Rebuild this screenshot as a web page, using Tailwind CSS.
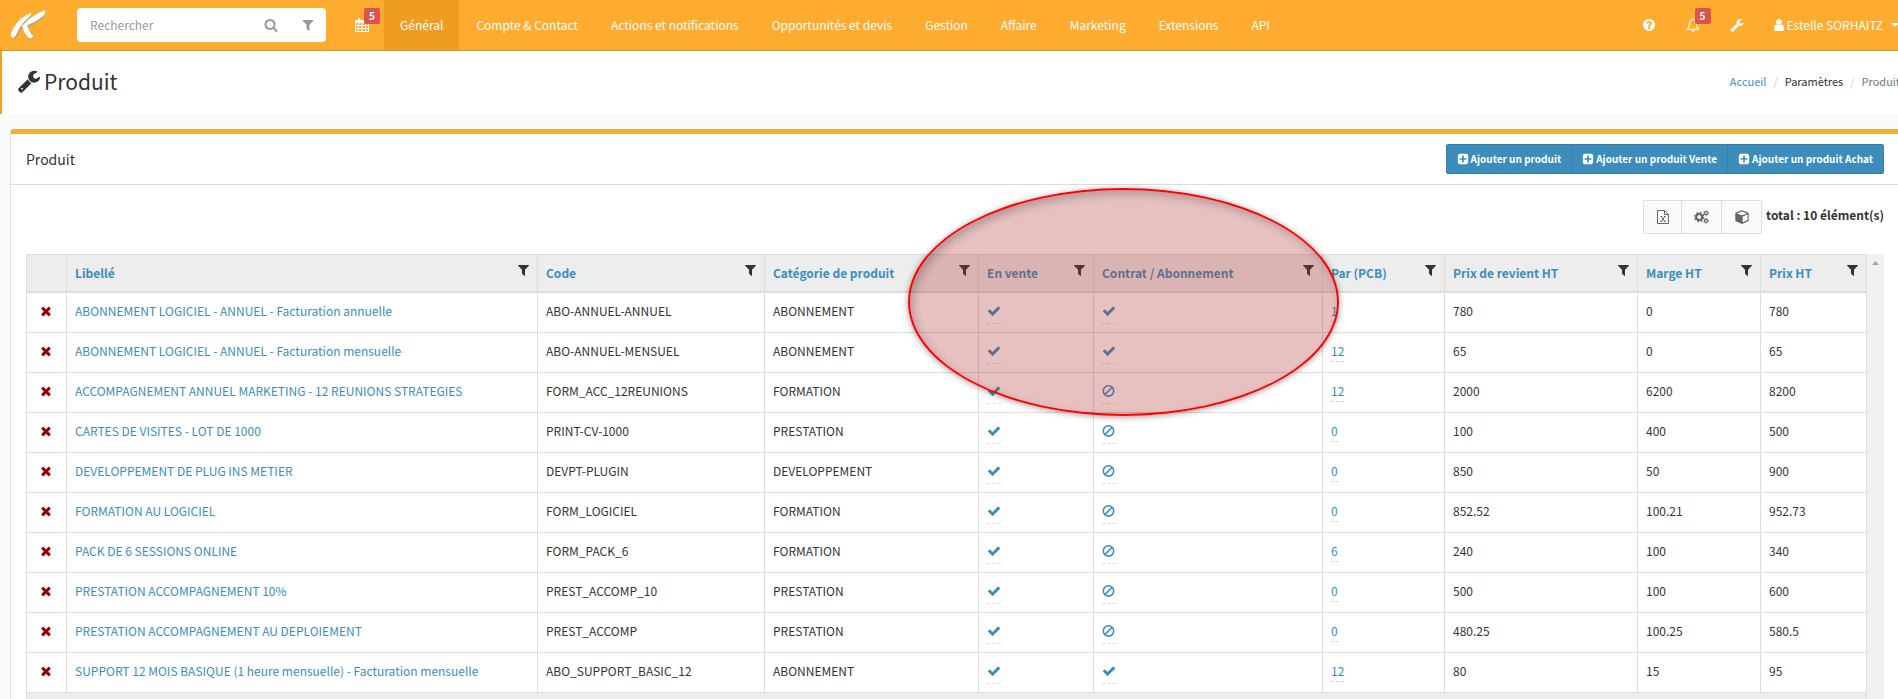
<!DOCTYPE html>
<html lang="fr">
  <head>
    <meta charset="UTF-8" />
    <meta name="viewport" content="width=device-width, initial-scale=1.0" />
    <title>Produit</title>
    <script src="https://cdn.jsdelivr.net/npm/@tailwindcss/browser@4"></script>
  </head>
  <body class="relative h-screen overflow-hidden bg-[#fafafa] font-['Noto_Sans_CJK_SC',sans-serif] text-[12px] leading-5 text-[#333]">
    <!-- Icônes -->
    <svg class="hidden">
      <symbol id="i-filter" viewBox="0 0 1408 1792"><path d="M1403 295q17 41-14 70l-493 493v742q0 42-39 59-13 5-25 5-27 0-45-19l-256-256q-19-19-19-45v-486l-493-493q-31-29-14-70 17-39 59-39h1280q42 0 59 39z" /></symbol>
      <symbol id="i-search" viewBox="0 0 1792 1792"><path d="M1216 832q0-185-131.500-316.500t-316.500-131.500-316.500 131.500-131.500 316.500 131.500 316.500 316.500 131.500 316.500-131.500 131.500-316.500zm512 832q0 52-38 90t-90 38q-54 0-90-38l-343-342q-179 124-399 124-143 0-273.500-55.500t-225-150-150-225-55.500-273.500 55.500-273.500 150-225 225-150 273.500-55.500 273.500 55.500 225 150 150 225 55.500 273.500q0 220-124 399l343 343q37 37 37 90z" /></symbol>
      <symbol id="i-wrench" viewBox="0 0 1792 1792"><path d="M448 1472q0-26-19-45t-45-19-45 19-19 45 19 45 45 19 45-19 19-45zm644-420l-682 682q-37 37-90 37-52 0-91-37l-106-108q-38-36-38-90 0-53 38-91l681-681q39 98 114.500 173.500t173.500 114.500zm634-435q0 39-23 106-47 134-164.500 217.500t-258.500 83.500q-185 0-316.500-131.500t-131.500-316.500 131.500-316.500 316.500-131.500q58 0 121.500 16.500t107.500 46.500q16 11 16 28t-16 28l-293 169v224l193 107q5-3 79-48.500t135.500-81 70.500-35.500q15 0 23.500 10t8.500 25z" /></symbol>
      <symbol id="i-check" viewBox="0 0 1792 1792"><path d="M1671 566q0 40-28 68l-724 724-136 136q-28 28-68 28t-68-28l-136-136-362-362q-28-28-28-68t28-68l136-136q28-28 68-28t68 28l294 295 656-657q28-28 68-28t68 28l136 136q28 28 28 68z" /></symbol>
      <symbol id="i-times" viewBox="0 0 1792 1792"><path d="M1490 1322q0 40-28 68l-136 136q-28 28-68 28t-68-28l-294-294-294 294q-28 28-68 28t-68-28l-136-136q-28-28-28-68t28-68l294-294-294-294q-28-28-28-68t28-68l136-136q28-28 68-28t68 28l294 294 294-294q28-28 68-28t68 28l136 136q28 28 28 68t-28 68l-294 294 294 294q28 28 28 68z" /></symbol>
      <symbol id="i-ban" viewBox="0 0 14 14"><path d="M6.500 1.700a5.200 5.200 0 1 0 0 10.400a5.200 5.200 0 1 0 0-10.400zM2.800 10.600l7.400-7.400" fill="none" stroke="currentColor" stroke-width="1.600" /></symbol>
      <symbol id="i-plus" viewBox="0 0 1792 1792"><path d="M1408 960v-128q0-26-19-45t-45-19h-320v-320q0-26-19-45t-45-19h-128q-26 0-45 19t-19 45v320h-320q-26 0-45 19t-19 45v128q0 26 19 45t45 19h320v320q0 26 19 45t45 19h128q26 0 45-19t19-45v-320h320q26 0 45-19t19-45zm256-544v960q0 119-84.500 203.500t-203.500 84.500h-960q-119 0-203.500-84.500t-84.500-203.500v-960q0-119 84.500-203.500t203.500-84.500h960q119 0 203.500 84.500t84.500 203.500z" /></symbol>
      <symbol id="i-help" viewBox="0 0 1792 1792"><path d="M1024 1376v-192q0-14-9-23t-23-9h-192q-14 0-23 9t-9 23v192q0 14 9 23t23 9h192q14 0 23-9t9-23zm256-672q0-88-55.500-163t-138.500-116-170-41q-243 0-371 213-15 24 8 42l132 100q7 6 19 6 16 0 25-12 53-68 86-92 34-24 86-24 48 0 85.500 26t37.500 59q0 38-20 61t-68 45q-63 28-115.500 86.500t-52.500 125.500v36q0 14 9 23t23 9h192q14 0 23-9t9-23q0-19 21.500-49.500t54.500-49.500q32-18 49-28.500t46-35 44.500-48 28-60.500 12.500-81zm384 192q0 209-103 385.500t-279.500 279.500-385.500 103-385.500-103-279.500-279.500-103-385.500 103-385.500 279.500-279.500 385.500-103 385.500 103 279.500 279.500 103 385.500z" /></symbol>
      <symbol id="i-user" viewBox="128 0 1408 1792"><path d="M1536 1399q0 109-62.500 187t-150.500 78h-854q-88 0-150.500-78t-62.500-187q0-85 8.500-160.500t31.500-152 58.500-131 94-89 134.500-34.500q131 128 313 128t313-128q76 0 134.500 34.500t94 89 58.500 131 31.500 152 8.500 160.500zm-256-887q0 159-112.500 271.500t-271.500 112.500-271.500-112.500-112.500-271.500 112.500-271.500 271.500-112.500 271.500 112.500 112.500 271.500z" /></symbol>
      <symbol id="i-calendar" viewBox="0 0 14 14"><path fill-rule="evenodd" d="M1 2h2V.8q0-.8.900-.8h.2q.9 0 .9.800V2h4V.8q0-.8.900-.8h.2q.9 0 .9.800V2h2q1 0 1 1v10q0 1-1 1H1q-1 0-1-1V3q0-1 1-1zM1 5v2h2V5zm3 0v2h2.500V5zm3.500 0v2H10V5zM11 5v2h2V5zM1 8v2h2V8zm3 0v2h2.500V8zm3.500 0v2H10V8zM11 8v2h2V8zM1 11v2h2v-2zm3 0v2h2.500v-2zm3.500 0v2H10v-2zm3.500 0v2h2v-2z" /></symbol>
      <symbol id="i-bell" viewBox="0 0 14 14"><path d="M7 1.300V.5M1.200 11.300q2.300-1.800 2.300-5.600Q3.500 1.800 7 1.800t3.500 3.900q0 3.800 2.300 5.600zM5.600 11.800q.2 1.500 1.400 1.500t1.400-1.500" fill="none" stroke="currentColor" stroke-width="1.100" stroke-linejoin="round" stroke-linecap="round" /></symbol>
      <symbol id="i-excel" viewBox="0 0 14 14"><path d="M1.500.5h7l4 4v9h-11zM8.500.5v4h4M4.500 6.500h1.800M8 6.500h1.700M4.300 11.500H6M7.900 11.500h1.800M5.300 6.500l3.500 5M8.800 6.500l-3.500 5" fill="none" stroke="currentColor" /></symbol>
      <symbol id="i-cogs" viewBox="0 0 15 14">
        <circle cx="5.200" cy="7" r="3" fill="none" stroke="currentColor" stroke-width="2.200" />
        <circle cx="5.200" cy="7" r="4.500" fill="none" stroke="currentColor" stroke-width="1.400" stroke-dasharray="1.770" />
        <circle cx="12" cy="3.200" r="1.500" fill="none" stroke="currentColor" stroke-width="1.200" />
        <circle cx="12" cy="3.200" r="2.400" fill="none" stroke="currentColor" stroke-width=".8" stroke-dasharray="1.260" />
        <circle cx="12" cy="10.800" r="1.500" fill="none" stroke="currentColor" stroke-width="1.200" />
        <circle cx="12" cy="10.800" r="2.400" fill="none" stroke="currentColor" stroke-width=".8" stroke-dasharray="1.260" />
      </symbol>
      <symbol id="i-cube" viewBox="0 0 14 14"><path fill-rule="evenodd" d="M7 .3l6.200 2.300q.5.300.5.900v6.800q0 .6-.5.900L7 14 .8 11.200q-.5-.3-.5-.9V3.500q0-.6.500-.9zM7 1.500L1.900 3.400 7 5.300l5.100-1.900zM7.700 6.500v5.800l4.900-2.300V4.600z" /></symbol>
    </svg>

    <nav class="flex h-[51px] items-stretch whitespace-nowrap border-b border-[#dc952a] bg-[#fdac2f] text-white">
      <a href="#" aria-label="Accueil" class="flex w-[77px] items-center pl-[10px]">
        <svg class="h-8 w-9" viewBox="0 0 36 32">
          <g id="logo-k" fill="#b9a878">
            <path d="M22 6q1 2-4 6Q11 18 7 28q-2 3-5 1-1-3 3-10Q11 10 22 6z" />
            <path d="M35 4q1 3-2 5-7 6-18 10z" />
            <path d="M13 18h5q2 6 6 10 0 3-4 2-5-4-7-12z" />
          </g>
          <g fill="#fff">
            <path d="M21 4q1 2-4 6Q10 16 6 26q-2 4-5 2-1-3 3-10Q10 8 21 4z" />
            <path d="M35 1q1 4-2 6-7 6-18 10l-3 0Q22 6 35 1z" />
            <path d="M12 16h5q2 7 6 11 0 3-4 2-5-4-7-13z" />
          </g>
        </svg>
      </a>
      <form class="my-2 flex w-[249px] items-center rounded bg-white pr-3 text-[#999]">
        <input type="text" aria-label="Rechercher" placeholder="Rechercher" class="min-w-0 flex-1 pl-[13px] outline-none placeholder:text-[#999]" />
        <button type="button" aria-label="Lancer la recherche"><svg class="size-[14px] fill-current"><use href="#i-search" /></svg></button>
        <button type="button" aria-label="Filtrer" class="ml-6"><svg class="h-[14px] w-[12px] fill-current"><use href="#i-filter" /></svg></button>
      </form>
      <a href="#" aria-label="Agenda" class="relative ml-[14px] flex items-center px-[15px]">
        <svg class="size-[14px] fill-current"><use href="#i-calendar" /></svg>
        <span class="absolute top-2 right-1 h-4 rounded-xs bg-[#d9534f] px-[5px] text-[10px] leading-4 font-bold">5</span>
      </a>
      <div class="flex gap-px">
        <a href="#" class="flex items-center bg-[#ee9d22] px-4">Général</a>
        <a href="#" class="flex items-center px-4">Compte &amp; Contact</a>
        <a href="#" class="flex items-center px-4">Actions et notifications</a>
        <a href="#" class="flex items-center px-4">Opportunités et devis</a>
        <a href="#" class="flex items-center px-4">Gestion</a>
        <a href="#" class="flex items-center px-4">Affaire</a>
        <a href="#" class="flex items-center px-4">Marketing</a>
        <a href="#" class="flex items-center px-4">Extensions</a>
        <a href="#" class="flex items-center px-4">API</a>
      </div>
      <div class="-mr-4 ml-auto flex">
        <a href="#" aria-label="Aide" class="flex items-center px-[15px]"><svg class="size-[14px] fill-current"><use href="#i-help" /></svg></a>
        <a href="#" aria-label="Notifications" class="relative flex items-center px-[15px]">
          <svg class="size-[14px]"><use href="#i-bell" /></svg>
          <span class="absolute top-2 right-1 h-4 rounded-xs bg-[#d9534f] px-[5px] text-[10px] leading-4 font-bold">5</span>
        </a>
        <a href="#" aria-label="Paramètres" class="flex items-center px-[15px]"><svg class="size-[14px] fill-current"><use href="#i-wrench" /></svg></a>
        <a href="#" class="flex items-center pr-[15px] pl-[14px]">
          <svg class="mr-[3px] h-[14px] w-[11px] fill-current"><use href="#i-user" /></svg>
          Estelle SORHAITZ
          <svg class="ml-2 h-1 w-2 fill-current" viewBox="0 0 8 4"><path d="M0 0h8L4 4z" /></svg>
        </a>
      </div>
    </nav>

    <header class="flex h-[63px] items-center border-l-2 border-[#f0a030] bg-white pb-[3px] pl-[15px]">
      <svg class="mr-[3px] size-6 fill-current"><use href="#i-wrench" /></svg>
      <h1 class="text-[21px] leading-8">Produit</h1>
      <ol class="-mr-[2px] ml-auto flex text-[11px]">
        <li><a href="#" class="text-[#3c8dbc]">Accueil</a></li>
        <li class="before:px-[7px] before:text-[#ccc] before:content-['/']">Paramètres</li>
        <li class="text-[#777] before:px-[7px] before:text-[#ccc] before:content-['/']">Produit</li>
      </ol>
    </header>

    <main class="mt-[15px] ml-[10px] rounded-tl border-t-5 border-l border-t-[#f0ad40] border-l-[#ddd] bg-white">
      <div class="flex h-[51px] items-center border-b border-[#ddd] pr-[14px] pl-[15px]">
        <h2 class="text-[14px]">Produit</h2>
        <div class="ml-auto flex h-[30px] divide-x divide-[#367fa9] rounded-xs border border-[#367fa9] bg-[#3c8dbc] text-[10px] font-bold text-white">
          <button class="flex items-center px-[10px]"><svg class="mr-[2px] size-3 fill-current"><use href="#i-plus" /></svg>Ajouter un produit</button>
          <button class="flex items-center px-[10px]"><svg class="mr-[2px] size-3 fill-current"><use href="#i-plus" /></svg>Ajouter un produit Vente</button>
          <button class="flex items-center px-[10px]"><svg class="mr-[2px] size-3 fill-current"><use href="#i-plus" /></svg>Ajouter un produit Achat</button>
        </div>
      </div>

      <div class="flex justify-end gap-1 pt-[15px] pr-[14px] pb-5">
        <div class="flex h-[34px] divide-x divide-[#ddd] rounded-xs border border-[#ddd] bg-[#fafafa] text-[#666]">
          <button aria-label="Exporter vers Excel" class="flex w-[38px] items-center justify-center"><svg class="size-[14px]"><use href="#i-excel" /></svg></button>
          <button aria-label="Configurer" class="flex w-10 items-center justify-center"><svg class="h-[14px] w-[15px]"><use href="#i-cogs" /></svg></button>
          <button aria-label="Modules" class="flex w-[39px] items-center justify-center"><svg class="size-[14px] fill-current"><use href="#i-cube" /></svg></button>
        </div>
        <p class="pt-[5px] font-bold">total : 10 élément(s)</p>
      </div>

      <div class="flex pr-[14px] pl-[15px]">
        <table class="flex-1 table-fixed border-separate border-spacing-0 border-t border-l border-[#ddd] text-left">
          <colgroup>
            <col class="w-10" />
            <col />
            <col class="w-[227px]" />
            <col class="w-[214px]" />
            <col class="w-[115px]" />
            <col class="w-[229px]" />
            <col class="w-[122px]" />
            <col class="w-[193px]" />
            <col class="w-[123px]" />
            <col class="w-[106px]" />
          </colgroup>
          <thead class="bg-[#ededed] text-[#3c8dbc]">
            <tr id="entetes"></tr>
          </thead>
          <tbody id="produits"></tbody>
          <tfoot class="bg-[#ededed]">
            <tr><td colspan="10" class="h-10 border-r border-[#ddd]"></td></tr>
          </tfoot>
        </table>
        <div class="flex w-[17px] justify-center bg-[#f1f1f1] pt-[7px]">
          <svg class="h-1 w-[7px] fill-[#a3a3a3]" viewBox="0 0 7 4"><path d="M3.500 0L7 4H0z" /></svg>
        </div>
      </div>
    </main>

    <!-- Zone mise en évidence -->
    <div class="pointer-events-none absolute top-[188px] left-[908px] h-[228px] w-[431px] rounded-[50%] border-2 border-[#ff0000] bg-[rgb(175,45,45)]/30 shadow-[0_1px_6px_rgba(0,0,0,0.4),inset_3px_4px_8px_rgba(0,0,0,0.22)]"></div>

    <script>
      const colonnes = [
        "Libellé",
        "Code",
        "Catégorie de produit",
        "En vente",
        "Contrat / Abonnement",
        "Par (PCB)",
        "Prix de revient HT",
        "Marge HT",
        "Prix HT",
      ];

      // libellé, code, catégorie, en vente, contrat, PCB, revient, marge, prix
      const produits = [
        ["ABONNEMENT LOGICIEL - ANNUEL - Facturation annuelle", "ABO-ANNUEL-ANNUEL", "ABONNEMENT", true, true, 1, "780", "0", "780"],
        ["ABONNEMENT LOGICIEL - ANNUEL - Facturation mensuelle", "ABO-ANNUEL-MENSUEL", "ABONNEMENT", true, true, 12, "65", "0", "65"],
        ["ACCOMPAGNEMENT ANNUEL MARKETING - 12 REUNIONS STRATEGIES", "FORM_ACC_12REUNIONS", "FORMATION", true, false, 12, "2000", "6200", "8200"],
        ["CARTES DE VISITES - LOT DE 1000", "PRINT-CV-1000", "PRESTATION", true, false, 0, "100", "400", "500"],
        ["DEVELOPPEMENT DE PLUG INS METIER", "DEVPT-PLUGIN", "DEVELOPPEMENT", true, false, 0, "850", "50", "900"],
        ["FORMATION AU LOGICIEL", "FORM_LOGICIEL", "FORMATION", true, false, 0, "852.52", "100.21", "952.73"],
        ["PACK DE 6 SESSIONS ONLINE", "FORM_PACK_6", "FORMATION", true, false, 6, "240", "100", "340"],
        ["PRESTATION ACCOMPAGNEMENT 10%", "PREST_ACCOMP_10", "PRESTATION", true, false, 0, "500", "100", "600"],
        ["PRESTATION ACCOMPAGNEMENT AU DEPLOIEMENT", "PREST_ACCOMP", "PRESTATION", true, false, 0, "480.25", "100.25", "580.5"],
        ["SUPPORT 12 MOIS BASIQUE (1 heure mensuelle) - Facturation mensuelle", "ABO_SUPPORT_BASIC_12", "ABONNEMENT", true, true, 12, "80", "15", "95"],
      ];

      const cellule = (contenu) =>
        `<td class="h-10 truncate border-r border-b border-[#ddd] px-2 pt-2 pb-[7px] align-top">${contenu}</td>`;

      const booleen = (valeur) => `
        <button aria-label="${valeur ? "Oui" : "Non"}" class="block h-[23px] border-b border-dashed border-[#ddd] pb-[2px] text-[#3c8dbc]">
          <svg class="size-[14px] fill-current"><use href="${valeur ? "#i-check" : "#i-ban"}" /></svg>
        </button>`;

      document.getElementById("entetes").innerHTML =
        `<th class="border-r border-b-2 border-[#ddd]"></th>` +
        colonnes
          .map(
            (nom) => `
          <th class="h-[38px] border-r border-b-2 border-[#ddd] px-2 py-0 font-bold">
            <div class="flex justify-between">
              ${nom}
              <button aria-label="Filtrer ${nom}" class="h-[14px] text-[#333]"><svg class="h-[14px] w-[11px] fill-current"><use href="#i-filter" /></svg></button>
            </div>
          </th>`
          )
          .join("");

      document.getElementById("produits").innerHTML = produits
        .map(
          ([libelle, code, categorie, vente, contrat, pcb, revient, marge, prix]) => `
          <tr>
            <td class="h-10 border-r border-b border-[#ddd] pt-[11px] pr-px align-top">
              <button aria-label="Supprimer" class="mx-auto block text-[#990000]"><svg class="size-[14px] fill-current"><use href="#i-times" /></svg></button>
            </td>
            ${cellule(`<a href="#" class="text-[#3c8dbc]">${libelle}</a>`)}
            ${cellule(code)}
            ${cellule(categorie)}
            ${cellule(booleen(vente))}
            ${cellule(booleen(contrat))}
            ${cellule(`<a href="#" class="block w-fit border-b border-dashed border-[#ccc] text-[#3c8dbc]">${pcb}</a>`)}
            ${cellule(revient)}
            ${cellule(marge)}
            ${cellule(prix)}
          </tr>`
        )
        .join("");
    </script>
  </body>
</html>
